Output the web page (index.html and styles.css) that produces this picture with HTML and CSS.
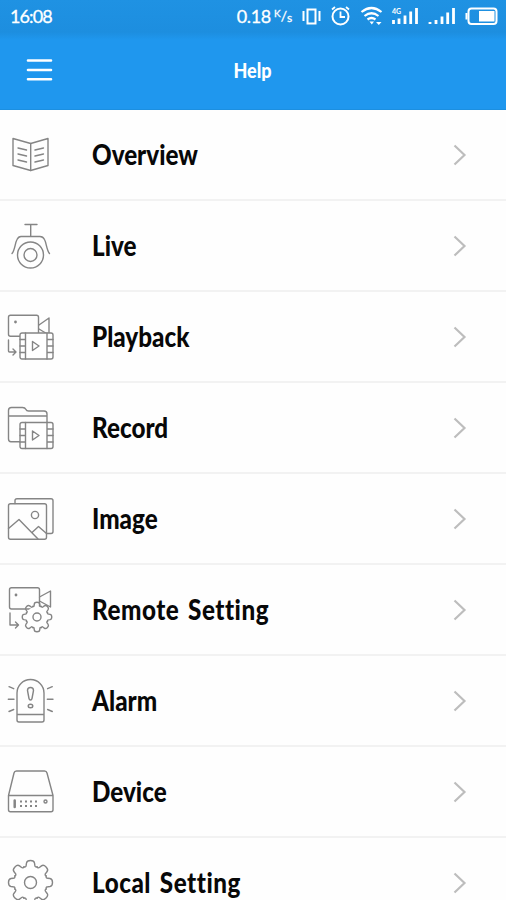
FILE: index.html
```html
<!DOCTYPE html>
<html lang="en">
<head>
    <meta charset="UTF-8">
    <meta name="viewport" content="width=device-width, initial-scale=1.0">
    <title>Help</title>
    <link rel="stylesheet" href="styles.css">
</head>
<body>
    <!-- shared shapes -->
    <svg class="defs" width="0" height="0">
        <symbol id="film" viewBox="0 0 35 28" overflow="visible">
            <rect x="1" y="1" width="33" height="26" rx="2" fill="#fff"/>
            <path d="M6.500 1v26M28 1v26M1 7.500h5.500M1 14h5.500M1 20.500h5.500M28 7.500h6M28 14h6M28 20.500h6M13.500 9.500v9l6.500-4.500z"/>
        </symbol>
        <g id="tooth">
            <path d="M-6.500 -15.700Q-4.500 -15.100 -4.300 -17.300L-4 -19.500Q-3.600 -22 0 -22Q3.600 -22 4 -19.500L4.300 -17.300Q4.500 -15.100 6.500 -15.700" vector-effect="non-scaling-stroke"/>
        </g>
        <g id="gear">
            <circle r="16" fill="#fff" stroke="none"/>
            <use href="#tooth"/>
            <use href="#tooth" transform="rotate(45)"/>
            <use href="#tooth" transform="rotate(90)"/>
            <use href="#tooth" transform="rotate(135)"/>
            <use href="#tooth" transform="rotate(180)"/>
            <use href="#tooth" transform="rotate(225)"/>
            <use href="#tooth" transform="rotate(270)"/>
            <use href="#tooth" transform="rotate(315)"/>
            <circle r="6" vector-effect="non-scaling-stroke"/>
        </g>
        <symbol id="chevron" viewBox="0 0 14 24">
            <path d="M1.500 2.500L11.500 12L1.500 21.500"/>
        </symbol>
    </svg>

    <div class="status-bar">
        <span class="clock">16:08</span>
        <div class="status-right">
            <span class="speed">0.18</span>
            <span class="unit"><sup>K</sup>/<sub>s</sub></span>
            <svg class="status-icons" width="202" height="32" viewBox="296 0 202 32">
                <!-- vibrate -->
                <path d="M307.500 9.500h8v14h-8zM303.500 11v10M319.500 11v10" stroke-width="2"/>
                <!-- alarm clock -->
                <circle cx="340.500" cy="16.500" r="8" stroke-width="2"/>
                <path d="M340.500 11.500v5.500h4.500M332 9.500l3-2.500M349 9.500l-3-2.500" stroke-width="1.800"/>
                <!-- wifi -->
                <path d="M361.500 12q10-8 20 0M364.500 16q7-5.500 14 0M367.500 19.500q4-3 8 0" stroke-width="2.200"/>
                <path d="M369.500 21.500h4.500l-2.200 3zM376 22h5.500l-2.700 3z" fill="#fff" stroke="none"/>
                <!-- signal 1 -->
                <path d="M393.500 20v4M399 18.500v5.500M405 15.500v8.500M410.700 11.500v12.500M416.500 8v16" stroke-width="2.800"/>
                <text x="392" y="14">4G</text>
                <!-- signal 2 -->
                <path d="M430 22v2M436 20v4M442 16.500v7.500M447.700 12.500v11.500M453.500 8v16" stroke-width="2.800"/>
                <!-- battery -->
                <rect x="468.500" y="8.500" width="28" height="15.500" rx="3" stroke-width="2"/>
                <path d="M479 11h15.500v10.500h-15.500zM465.500 13h2v6.500h-2z" fill="#fff" stroke="none"/>
            </svg>
        </div>
    </div>

    <div class="header">
        <svg class="menu" width="28" height="28" viewBox="0 0 28 28">
            <path d="M3 4.500h23M3 14h23M3 23.300h23"/>
        </svg>
        <h1>Help</h1>
    </div>

    <div class="list">
        <div class="row">
            <svg class="icon" viewBox="0 0 60 89">
                <path d="M13 28.500L30.700 33.500L48 28.500V55.500L30.700 60.500L13 55.500z"/>
                <path d="M30.700 33.500V60.500M18 38l8.500 2M18 44l8.500 2M18 50l8.500 2M43.500 38l-8.500 2M43.500 44l-8.500 2M43.500 50l-8.500 2"/>
            </svg>
            <span class="label">Overview</span>
            <svg class="chevron"><use href="#chevron"/></svg>
        </div>
        <div class="row">
            <svg class="icon" viewBox="0 0 60 89">
                <path d="M25 23.500h12M30.700 23.500v12M12 52.500C15 49 15 42 17 38.500Q18.500 35.500 21 35.500H40Q43 35.500 44.500 38.500C46.500 42 46.500 49 49.500 52.500"/>
                <circle cx="30.500" cy="54" r="13"/>
                <circle cx="30.500" cy="54" r="6.500"/>
            </svg>
            <span class="label">Live</span>
            <svg class="chevron"><use href="#chevron"/></svg>
        </div>
        <div class="row">
            <svg class="icon" viewBox="0 0 60 89">
                <rect x="8.500" y="23.200" width="30" height="21" rx="2"/>
                <path d="M39 33L49 26V43L39 37M8.500 48v11q0 1 1 1h6M13 57l3 3l-3 3"/>
                <circle cx="15.500" cy="30" r=".7"/>
                <use href="#film" x="19" y="40" width="35" height="28"/>
            </svg>
            <span class="label">Playback</span>
            <svg class="chevron"><use href="#chevron"/></svg>
        </div>
        <div class="row">
            <svg class="icon" viewBox="0 0 60 89">
                <path d="M20 58.700H11Q8.500 58.700 8.500 56V27.500Q8.500 24.500 11.500 24.500H22.500Q25 24.500 26 26.500Q26.500 28 28.500 28H44Q47 28 47 31V40M8.500 33H47"/>
                <use href="#film" x="19" y="38.500" width="35" height="28"/>
            </svg>
            <span class="label">Record</span>
            <svg class="chevron"><use href="#chevron"/></svg>
        </div>
        <div class="row">
            <svg class="icon" viewBox="0 0 60 89">
                <path d="M15 29.500V26.500Q15 24.700 17 24.700H51Q53 24.700 53 26.700V57.500Q53 59.500 51 59.500H46.500"/>
                <rect x="8.500" y="29.700" width="38" height="35.500" rx="2"/>
                <circle cx="35" cy="41" r="3.600"/>
                <path d="M8.500 54.500L19 45.500L38 65M32 58.500L38.500 52.500L46.500 59.500"/>
            </svg>
            <span class="label">Image</span>
            <svg class="chevron"><use href="#chevron"/></svg>
        </div>
        <div class="row">
            <svg class="icon" viewBox="0 0 60 89">
                <rect x="9.500" y="22.700" width="30" height="21.300" rx="2"/>
                <path d="M39.500 32L50.500 26V42L39.500 36M10 48v12h8.500M15.500 57l3 3l-3 3"/>
                <circle cx="16" cy="30" r=".7"/>
                <use href="#gear" transform="translate(37 52) scale(.67)"/>
            </svg>
            <span class="label label-long">Remote Setting</span>
            <svg class="chevron"><use href="#chevron"/></svg>
        </div>
        <div class="row">
            <svg class="icon" viewBox="0 0 60 89">
                <path d="M17 64V37a13.500 13.500 0 0 1 27 0V64q0 2-2 2H19q-2 0-2-2zM17 58.500H44"/>
                <path d="M27.500 34.500q0-3 3-3t3 3l-1.500 8q-.3 1.500-1.500 1.500t-1.500-1.500z"/>
                <ellipse cx="30.500" cy="50" rx="2.300" ry="1.800"/>
                <path d="M9 30.700l4.700 2M8.300 43.300h5.700M9 55.500l4.700-2M52.300 30.700l-4.700 2M53 43.300h-5.700M52.300 55.500l-4.700-2"/>
            </svg>
            <span class="label">Alarm</span>
            <svg class="chevron"><use href="#chevron"/></svg>
        </div>
        <div class="row">
            <svg class="icon" viewBox="0 0 60 89">
                <path d="M8.500 48.500L14 26Q14.500 24 16.500 24H44.500Q46.500 24 47 26L53 48.500V62.700Q53 64.700 51 64.700H10.500Q8.500 64.700 8.500 62.700zM8.500 48.500H53"/>
                <path d="M14.700 53.500v6.500" stroke-width="2.500"/>
                <path d="M20 54.500h18M20 59h18" stroke-width="2" stroke-dasharray="2 3" stroke-linecap="butt"/>
                <circle cx="45.500" cy="54.500" r="1.500"/>
            </svg>
            <span class="label">Device</span>
            <svg class="chevron"><use href="#chevron"/></svg>
        </div>
        <div class="row">
            <svg class="icon" viewBox="0 0 60 89">
                <use href="#gear" transform="translate(30.500 44.500)"/>
            </svg>
            <span class="label label-long">Local Setting</span>
            <svg class="chevron"><use href="#chevron"/></svg>
        </div>
    </div>
</body>
</html>
```

FILE: styles.css
```css
* {
    margin: 0;
    padding: 0;
    box-sizing: border-box;
}

body {
    font-family: Lato, 'Open Sans', sans-serif;
    background: #fefefe;
    color: #080808;
    height: 900px;
    overflow: hidden;
}

.defs {
    display: block;
    height: 0;
}

svg {
    fill: none;
    flex-shrink: 0;
}

/* status bar */
.status-bar {
    height: 40px;
    padding: 0 8px 8px 10px;
    background: linear-gradient(#1f92e3 0, #1d8edf 32px, #1f97ee 40px);
    color: #fff;
    display: flex;
    align-items: center;
    justify-content: space-between;
    font-size: 18px;
}

.clock {
    letter-spacing: -0.9px;
    -webkit-text-stroke: 0.3px #fff;
}

.status-right {
    display: flex;
    align-items: center;
}

.speed {
    letter-spacing: -0.3px;
    -webkit-text-stroke: 0.3px #fff;
}

.unit {
    width: 22px;
    margin-left: 3px;
    font-size: 14px;
    line-height: 16px;
    white-space: nowrap;
    -webkit-text-stroke: 0.3px #fff;
}

.unit sup,
.unit sub {
    font-size: 10px;
    line-height: 0;
}

.unit sup {
    vertical-align: 4px;
}

.unit sub {
    font-size: 12px;
    vertical-align: -1px;
}

.status-icons {
    stroke: #fff;
}

.status-icons text {
    font-size: 7px;
    font-weight: bold;
    fill: #fff;
    stroke: none;
}

/* title bar */
.header {
    height: 70px;
    padding: 0 26px 9px 25px;
    background: #1f97ee;
    border-bottom: 1px solid #1c8fe0;
    color: #fff;
    display: grid;
    grid-template-columns: 28px 1fr 28px;
    align-items: center;
}

.menu {
    stroke: #fff;
    stroke-width: 2.6;
    stroke-linecap: round;
}

.header h1 {
    font-size: 20px;
    font-weight: 900;
    line-height: 24px;
    text-align: center;
    transform: scaleX(0.9);
}

/* help topics */
.row {
    height: 91px;
    border-bottom: 2px solid #f2f2f2;
    display: flex;
    align-items: center;
    padding-right: 39px;
}

.icon {
    width: 60px;
    height: 89px;
    stroke: #858585;
    stroke-width: 1.4;
    stroke-linecap: round;
    stroke-linejoin: round;
}

.label {
    flex: 1;
    margin-left: 32px;
    padding-bottom: 2px;
    font-size: 28px;
    font-weight: 900;
    font-variant-ligatures: none;
    line-height: 36px;
    white-space: nowrap;
    transform: scaleX(0.865);
    transform-origin: left;
}

.label-long {
    letter-spacing: 0.6px;
    word-spacing: 3px;
}

.chevron {
    width: 14px;
    height: 24px;
    stroke: #bdbdbd;
    stroke-width: 2.2;
}
```
